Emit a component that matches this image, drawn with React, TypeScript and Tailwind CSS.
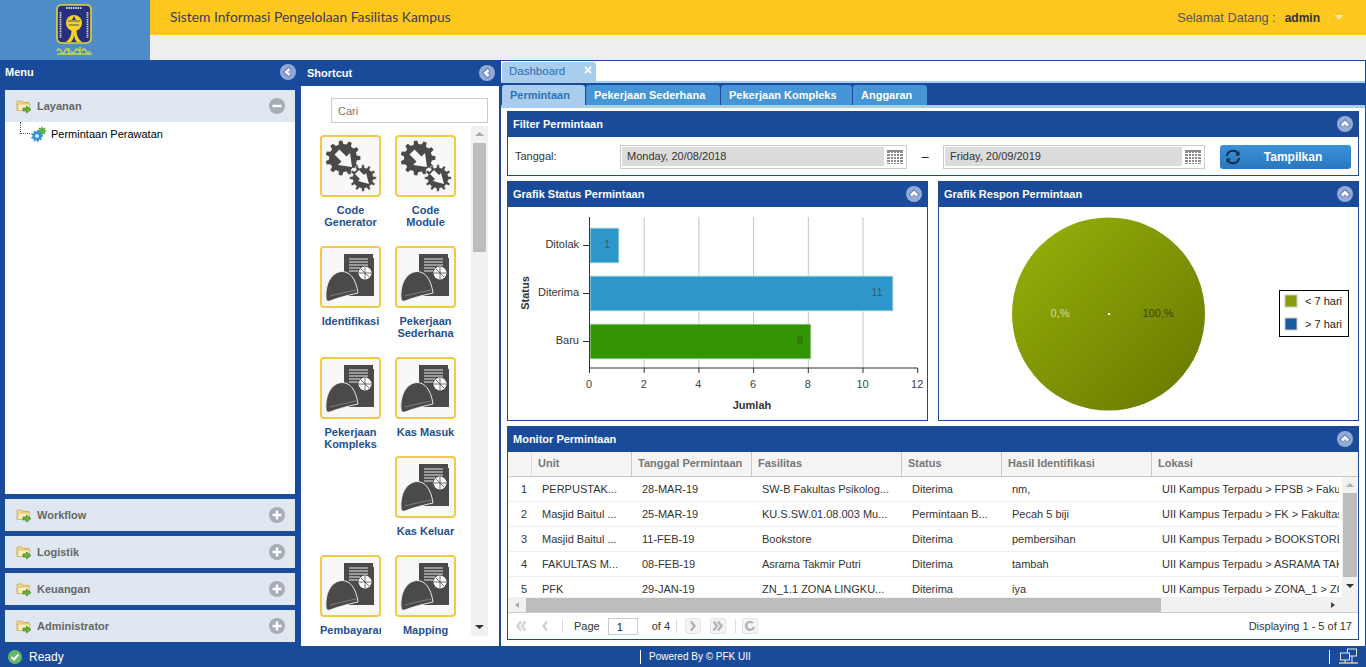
import { ReactNode } from "react";

const gearPath = (cx: number, cy: number, ro: number, ri: number, teeth: number) => {
  const pts: string[] = [];
  const step = (Math.PI * 2) / teeth;
  for (let i = 0; i < teeth; i++) {
    const a = i * step;
    const offs: [number, number][] = [
      [-0.3, ri],
      [-0.17, ro],
      [0.17, ro],
      [0.3, ri],
    ];
    offs.forEach(([o, r]) => {
      const t = a + o * step;
      pts.push(`${(cx + Math.cos(t) * r).toFixed(2)},${(cy + Math.sin(t) * r).toFixed(2)}`);
    });
  }
  return `M${pts.join("L")}Z`;
};

function GearIcon() {
  return (
    <svg width="57" height="58" viewBox="2 2 57 58">
      <path d={gearPath(23, 23, 17.5, 14, 11)} fill="#4a4a4a" />
      <path d={gearPath(43, 43, 13.5, 10.5, 12)} fill="#4a4a4a" stroke="#f8f8f8" strokeWidth="0.6" />
      <path d="M14.5 19.5 L19.5 14.5 L26.5 21.5 L30 18 L32 32 L18 30 L21.5 26.5 Z" fill="#f8f8f8" />
      <path d="M35 39 L39 35 L44 40 L46 38 L49 49 L38 46 L40 44 Z" fill="#f8f8f8" />
    </svg>
  );
}

function HatIcon() {
  return (
    <svg width="57" height="58" viewBox="2 2 57 58">
      <rect x="28" y="12" width="26" height="38" fill="#4a4a4a" />
      <rect x="24" y="8" width="29" height="37" fill="#4a4a4a" />
      <path d="M29 13H48M29 16H48M29 19H48M29 22H40M29 25H38" stroke="#b5b5b5" strokeWidth="1.6" />
      <circle cx="45" cy="27" r="6.5" fill="#fff" />
      <path d="M45 21V33M39 27H51M41 23L49 31" stroke="#4a4a4a" strokeWidth="0.8" />
      <path
        d="M6 52 C5 40 10 27 21 25.500 C30 25 36 33 38 47 C29 49 17 52 10 55 C8 55.500 6 55 6 52 Z"
        fill="#4a4a4a"
        stroke="#f8f8f8"
        strokeWidth="0.9"
      />
      <path d="M10 50 C17 48 27 46 36 44" stroke="#8a8a8a" strokeWidth="0.8" fill="none" />
    </svg>
  );
}

function Logo() {
  return (
    <svg width="40" height="52" viewBox="0 0 40 52">
      <path d="M6 1 H32 Q36 1 36 6 V34 Q36 39 30 39 H8 Q2 39 2 34 V6 Q2 1 6 1 Z" fill="#27307f" stroke="#e2d43a" strokeWidth="1.6" />
      <path d="M11 4 H27 M5.5 8 V34 M32.5 8 V34" stroke="#d8d8c8" strokeWidth="1.8" strokeDasharray="1.5 0.8" />
      <circle cx="19" cy="19" r="8" fill="#f2d520" />
      <path d="M13 17 H25 M14 21 H24" stroke="#27307f" strokeWidth="0.8" />
      <path d="M19 12 L21 16 H17 Z" fill="#27307f" />
      <path d="M16.5 26 C16.5 31 15 35 11 38 H16 C18 36 19 33 19 30 C19 33 20 36 22 38 H27 C23 35 21.5 31 21.5 26 Z" fill="#f2d520" />
      <path
        d="M2 47 q2 -4 4 0 t4 0 t4 0 M14 44 v6 M16 47 q2 4 4 0 t4 0 M25 43 v7 M27 47 q2 -4 4 0 t4 0 M2 50 H37"
        stroke="#c6d84a"
        strokeWidth="1.6"
        fill="none"
      />
    </svg>
  );
}

function Chevron({ dir }: { dir: "left" | "up" }) {
  return (
    <svg width="16" height="16" viewBox="0 0 16 16" className="shrink-0">
      <circle cx="8" cy="8" r="8" fill="#94abd6" />
      <path
        d={dir === "left" ? "M10 3.8 L5.8 8 L10 12.2" : "M3.8 10 L8 5.8 L12.2 10"}
        fill="none"
        stroke="#5f84bb"
        strokeWidth="4.4"
      />
      <path
        d={dir === "left" ? "M9.5 4.8 L6.3 8 L9.5 11.2" : "M4.8 9.5 L8 6.3 L11.2 9.5"}
        fill="none"
        stroke="#fff"
        strokeWidth="2.6"
      />
    </svg>
  );
}

function Folder() {
  return (
    <svg width="16" height="16" viewBox="0 0 16 16" className="shrink-0">
      <path d="M1 3 H6 L7 4.5 H13 V12.5 H1 Z" fill="#f5dc8c" stroke="#c9a550" strokeWidth="0.8" />
      <path d="M2 6 H14 L13 12.5 H1.5 Z" fill="#fbeeb8" stroke="#c9a550" strokeWidth="0.6" />
      <path d="M7 10 H10.5 V8 L15 11.5 L10.5 15 V13 H7 Z" fill="#6cb23e" stroke="#3f7f22" strokeWidth="0.7" />
    </svg>
  );
}

function AccordionHead({ label, open }: { label: string; open?: boolean }) {
  return (
    <div className="h-8 bg-[#dfe8f1] flex items-center pl-[11px] pr-[10px] shrink-0">
      <Folder />
      <span className="ml-[5px] flex-1 text-[11px] font-bold text-[#666]">{label}</span>
      <svg width="16" height="16" viewBox="0 0 16 16">
        <circle cx="8" cy="8" r="8" fill="#a6adb5" />
        <path d={open ? "M3.5 8H12.5" : "M3.5 8H12.5M8 3.5V12.5"} stroke="#fff" strokeWidth="2.4" />
      </svg>
    </div>
  );
}

function Shortcut({ label, icon }: { label: ReactNode; icon: "gear" | "hat" }) {
  return (
    <div className="w-[61px]">
      <div className="w-[61px] h-[62px] border-2 border-[#f3ca47] rounded-[4px] bg-[#f8f8f8] flex items-center justify-center">
        {icon === "gear" ? <GearIcon /> : <HatIcon />}
      </div>
      <div className="mt-[7px] text-[11px] leading-[12px] font-bold text-[#25508f] text-center overflow-hidden whitespace-nowrap">
        {label}
      </div>
    </div>
  );
}

function PanelHead({ title }: { title: string }) {
  return (
    <div className="h-[26px] bg-[#1a4b9a] flex items-center justify-between pl-[5px] pr-[5px] shrink-0">
      <span className="text-[11px] font-bold text-white">{title}</span>
      <Chevron dir="up" />
    </div>
  );
}

function DateField({ value, width }: { value: string; width: string }) {
  return (
    <div className={`h-[24px] border border-[#ccc] flex items-center pl-[1px] pr-[3px] ${width}`}>
      <div className="flex-1 h-[19px] bg-[#dcdcdc] pl-[5px] text-[11px] leading-[19px] text-[#333]">{value}</div>
      <svg width="16" height="14" viewBox="0 0 16 14" className="ml-[3px]">
        <rect width="16" height="14" fill="#8d8d8d" />
        <path d="M0 3.5H16M0 6.5H16M0 9.5H16M0 12.5H16M3.5 2V14M6.5 2V14M9.5 2V14M12.5 2V14" stroke="#fff" strokeWidth="1" />
      </svg>
    </div>
  );
}

function BarChart() {
  const bars = [
    { y: 228, to: 619, c: "#2e97c9", label: "Ditolak", v: "1", tx: 607 },
    { y: 276, to: 893, c: "#2e97c9", label: "Diterima", v: "11", tx: 877 },
    { y: 324, to: 811, c: "#329400", label: "Baru", v: "8", tx: 800 },
  ];
  const ticks = [0, 2, 4, 6, 8, 10, 12];
  const xOf = (t: number) => 589.5 + t * 27.35;
  return (
    <svg width="419" height="213" viewBox="508 207 419 213" fontFamily="'Liberation Sans', Arial, sans-serif">
      {ticks.slice(1, 6).map((t) => (
        <line key={t} x1={xOf(t)} x2={xOf(t)} y1="217" y2="368" stroke="#c4c4c4" />
      ))}
      {bars.map((b) => (
        <g key={b.label}>
          <rect x="590" y={b.y} width={b.to - 590} height="35" fill={b.c} stroke="#d8e8e0" strokeWidth="1" />
          <line x1="583" x2="589.5" y1={b.y + 17.5} y2={b.y + 17.5} stroke="#333" />
          <text x="579" y={b.y + 20} textAnchor="end" fontSize="11" fill="#333">
            {b.label}
          </text>
          <text x={b.tx} y={b.y + 20} textAnchor="middle" fontSize="11" fill="#333" fillOpacity="0.6">
            {b.v}
          </text>
        </g>
      ))}
      <path d="M589.5 217V368H917.7" fill="none" stroke="#333" />
      {ticks.map((t) => (
        <g key={t}>
          <line x1={xOf(t)} x2={xOf(t)} y1="368" y2="373" stroke="#333" />
          <text x={xOf(t) - 0.5} y="388" textAnchor="middle" fontSize="11" fill="#444">
            {t}
          </text>
        </g>
      ))}
      <text x="752" y="409" textAnchor="middle" fontSize="11" fontWeight="bold" fill="#333">
        Jumlah
      </text>
      <text x="0" y="0" transform="translate(529 293) rotate(-90)" textAnchor="middle" fontSize="11" fontWeight="bold" fill="#333">
        Status
      </text>
    </svg>
  );
}

function PieChart() {
  return (
    <svg width="419" height="213" viewBox="939 207 419 213" fontFamily="'Liberation Sans', Arial, sans-serif">
      <defs>
        <linearGradient id="pie" x1="0.1" y1="0.1" x2="0.9" y2="0.9">
          <stop offset="0" stopColor="#93ac09" />
          <stop offset="1" stopColor="#6c7c00" />
        </linearGradient>
      </defs>
      <circle cx="1108.5" cy="314" r="96.5" fill="url(#pie)" />
      <rect x="1108" y="313" width="2" height="2" fill="#fff" />
      <text x="1060" y="317" textAnchor="middle" fontSize="11" fill="#d4dba0">
        0,%
      </text>
      <text x="1158" y="317" textAnchor="middle" fontSize="11" fill="#3c4400">
        100,%
      </text>
      <rect x="1279.5" y="290.5" width="69" height="46" fill="#fff" stroke="#000" />
      <rect x="1285" y="295" width="12" height="12" fill="#8a9e0c" stroke="#ccc" />
      <rect x="1285" y="318" width="12" height="12" fill="#1a5a9e" stroke="#ccc" />
      <text x="1305" y="305" fontSize="11" fill="#222">
        {"< 7 hari"}
      </text>
      <text x="1305" y="328" fontSize="11" fill="#222">
        {"> 7 hari"}
      </text>
    </svg>
  );
}

const columns = [
  { title: "Unit", w: "w-[100px]" },
  { title: "Tanggal Permintaan", w: "w-[120px]" },
  { title: "Fasilitas", w: "w-[150px]" },
  { title: "Status", w: "w-[100px]" },
  { title: "Hasil Identifikasi", w: "w-[150px]" },
  { title: "Lokasi", w: "w-[190px]" },
];

const rows = [
  ["1", "PERPUSTAK...", "28-MAR-19", "SW-B Fakultas Psikolog...", "Diterima", "nm,", "UII Kampus Terpadu > FPSB > Fakultas"],
  ["2", "Masjid Baitul ...", "25-MAR-19", "KU.S.SW.01.08.003 Mu...", "Permintaan B...", "Pecah 5 biji", "UII Kampus Terpadu > FK > Fakultas Ke"],
  ["3", "Masjid Baitul ...", "11-FEB-19", "Bookstore", "Diterima", "pembersihan", "UII Kampus Terpadu > BOOKSTORE"],
  ["4", "FAKULTAS M...", "08-FEB-19", "Asrama Takmir Putri", "Diterima", "tambah", "UII Kampus Terpadu > ASRAMA TAKMIR"],
  ["5", "PFK", "29-JAN-19", "ZN_1.1 ZONA LINGKU...", "Diterima", "iya", "UII Kampus Terpadu > ZONA_1 > ZONA"],
];

function PagerBtn({ d, flat }: { d: string; flat?: boolean }) {
  return (
    <svg width="16" height="16" viewBox="0 0 16 16" className="shrink-0">
      {!flat && <rect x="0.5" y="0.5" width="15" height="15" rx="2" fill="#f4f4f4" stroke="#e4e4e4" />}
      <path d={d} fill="none" stroke={flat ? "#d2d2d2" : "#b4b4b4"} strokeWidth="2.4" />
    </svg>
  );
}

function MonitorGrid() {
  return (
    <div className="flex-1 min-h-0 flex flex-col">
      <div className="h-[25px] bg-[#f5f5f5] border-b border-[#c8c8c8] flex shrink-0 text-[11px] font-bold text-[#777]">
        <div className="w-[24px] border-r border-[#ddd] shrink-0" />
        {columns.map((c) => (
          <div key={c.title} className={`${c.w} shrink-0 pl-[6px] leading-[23px] border-r border-[#c8c8c8] last:border-r-0 whitespace-nowrap overflow-hidden`}>
            {c.title}
          </div>
        ))}
      </div>
      <div className="h-[120px] flex shrink-0 overflow-hidden">
        <div className="flex-1 min-w-0 mr-[3px] overflow-hidden">
          {rows.map((r, i) => (
            <div key={r[0]} className={`h-[25px] flex text-[11px] leading-[25px] text-[#333] ${i < 4 ? "border-b border-[#eee]" : ""}`}>
              <div className="w-[24px] shrink-0 text-center pl-[8px]">{r[0]}</div>
              {columns.map((c, j) => (
                <div key={c.title} className={`${c.w} shrink-0 pl-[10px] whitespace-nowrap overflow-hidden`}>
                  {r[j + 1]}
                </div>
              ))}
            </div>
          ))}
        </div>
        <div className="w-[15px] mr-px shrink-0 bg-[#f1f1f1] flex flex-col items-center">
          <svg width="8" height="16" viewBox="0 0 8 16"><path d="M0 10 L4 6 L8 10Z" fill="#b0b0b0" /></svg>
          <div className="w-[14px] h-[84px] bg-[#bdbdbd]" />
          <svg width="8" height="20" viewBox="0 0 8 20"><path d="M0 7 L4 11 L8 7Z" fill="#333" /></svg>
        </div>
      </div>
      <div className="h-[16px] bg-[#f1f1f1] flex items-center shrink-0 border-b border-[#ccc]">
        <svg width="18" height="14" viewBox="0 0 18 14" className="shrink-0"><path d="M11 4 L7 7 L11 10Z" fill="#a8a8a8" /></svg>
        <div className="w-[635px] h-[14px] bg-[#bdbdbd] shrink-0" />
        <div className="flex-1" />
        <svg width="14" height="14" viewBox="0 0 14 14" className="shrink-0 mr-[18px]"><path d="M5 4 L9 7 L5 10Z" fill="#444" /></svg>
      </div>
      <div className="flex-1 flex items-center pl-[5px] pr-[6px] text-[11px] text-[#333]">
        <PagerBtn flat d="M8 3.5 L4.5 8 L8 12.5M12.5 3.5 L9 8 L12.5 12.5" />
        <div className="ml-[8px]"><PagerBtn flat d="M10 3.5 L6.5 8 L10 12.5" /></div>
        <div className="w-px h-[14px] bg-[#ddd] ml-[9px]" />
        <span className="ml-[11px]">Page</span>
        <div className="ml-[8px] w-[30px] h-[17px] border border-[#ccc] pl-[8px] leading-[17px] text-[#222]">1</div>
        <span className="ml-[14px]">of 4</span>
        <div className="w-px h-[14px] bg-[#ddd] ml-[6px]" />
        <div className="ml-[8px]"><PagerBtn d="M6 3.5 L9.5 8 L6 12.5" /></div>
        <div className="ml-[9px]"><PagerBtn d="M3.5 3.5 L7 8 L3.5 12.5M8 3.5 L11.5 8 L8 12.5" /></div>
        <div className="w-px h-[14px] bg-[#ddd] ml-[9px]" />
        <div className="ml-[6px]"><PagerBtn d="M11 5 A4 4 0 1 0 12 9" /></div>
        <span className="ml-auto">Displaying 1 - 5 of 17</span>
      </div>
    </div>
  );
}

export default function App() {
  return (
    <div className="w-[1366px] h-[667px] overflow-hidden flex flex-col bg-[#1a4b9a] font-['Liberation_Sans',Arial,sans-serif]">
      {/* header */}
      <div className="h-[60px] flex shrink-0">
        <div className="w-[150px] bg-[#4f8dc9] flex justify-center pt-[4px]">
          <Logo />
        </div>
        <div className="flex-1 flex flex-col">
          <div className="h-[35px] bg-[#fdc71d] flex items-center pl-[20px]">
            <span className="font-['Lato',sans-serif] text-[13.85px] text-[#3c3c50]">
              Sistem Informasi Pengelolaan Fasilitas Kampus
            </span>
            <span className="ml-auto text-[12.75px] text-[#55554a]">Selamat Datang :</span>
            <span className="ml-[9px] text-[12px] font-bold text-[#333]">admin</span>
            <div className="ml-[9px] w-px h-[15px] bg-[#f0d268]" />
            <svg width="8" height="5" viewBox="0 0 8 5" className="ml-[5px] mr-[23px]">
              <path d="M0 0H8L4 5Z" fill="#fbeeb0" />
            </svg>
          </div>
          <div className="flex-1 bg-[#eeeeee]" />
        </div>
      </div>

      {/* body */}
      <div className="flex-1 min-h-0 flex">
        {/* menu column */}
        <div className="w-[300px] shrink-0 flex flex-col pl-[5px] pr-[5px] pb-[4px]">
          <div className="h-[30px] flex items-center justify-between shrink-0 pb-[6px]">
            <span className="text-[11px] font-bold text-white">Menu</span>
            <div className="-mr-px"><Chevron dir="left" /></div>
          </div>
          <AccordionHead label="Layanan" open />
          <div className="flex-1 bg-white">
            <div className="flex items-center h-[24px] pl-[15px]">
              <div className="w-[10px] h-[12px] border-l border-b border-dotted border-[#555] -mt-[12px]" />
              <svg width="16" height="16" viewBox="0 0 16 16" className="ml-[1px]">
                <path d={gearPath(11, 5, 4.5, 3.2, 8)} fill="#5fae45" />
                <path d={gearPath(6, 10, 6, 4.5, 9)} fill="#2f8fd0" />
                <circle cx="6" cy="10" r="2" fill="#cfe9f9" />
              </svg>
              <span className="ml-[4px] text-[11px] text-black">Permintaan Perawatan</span>
            </div>
          </div>
          <div className="flex flex-col gap-[5px] pt-[5px]">
            {["Workflow", "Logistik", "Keuangan", "Administrator"].map((m) => (
              <AccordionHead key={m} label={m} />
            ))}
          </div>
        </div>

        {/* shortcut column */}
        <div className="w-[198px] ml-[1px] shrink-0 flex flex-col">
          <div className="h-[26px] flex items-center justify-between pl-[6px] pr-[4px] shrink-0">
            <span className="text-[11px] font-bold text-white">Shortcut</span>
            <Chevron dir="left" />
          </div>
          <div className="flex-1 min-h-0 bg-white flex flex-col pt-[12px] pr-[11px] pb-[10px]">
            <div className="ml-[30px] h-[25px] border border-[#ccc] pl-[6px] text-[11px] leading-[24px] text-[#777] shrink-0">Cari</div>
            <div className="flex-1 min-h-0 flex mt-[3px]">
              <div className="flex-1 overflow-hidden pl-[19px] pt-[9px]">
                <div className="grid grid-cols-[61px_61px] gap-x-[14px] auto-rows-min">
                  <div className="h-[111px]"><Shortcut icon="gear" label={<>Code<br />Generator</>} /></div>
                  <div className="h-[111px]"><Shortcut icon="gear" label={<>Code<br />Module</>} /></div>
                  <div className="h-[111px]"><Shortcut icon="hat" label="Identifikasi" /></div>
                  <div className="h-[111px]"><Shortcut icon="hat" label={<>Pekerjaan<br />Sederhana</>} /></div>
                  <div className="h-[99px]"><Shortcut icon="hat" label={<>Pekerjaan<br />Kompleks</>} /></div>
                  <div className="h-[99px]"><Shortcut icon="hat" label="Kas Masuk" /></div>
                  <div className="h-[99px]" />
                  <div className="h-[99px]"><Shortcut icon="hat" label="Kas Keluar" /></div>
                  <Shortcut icon="hat" label="Pembayaran" />
                  <Shortcut icon="hat" label="Mapping" />
                </div>
              </div>
              <div className="w-[17px] shrink-0 bg-[#f1f1f1] flex flex-col items-center">
                <svg width="9" height="17" viewBox="0 0 9 17"><path d="M0 10 L4.5 6 L9 10Z" fill="#aaa" /></svg>
                <div className="w-[13px] h-[109px] bg-[#bdbdbd]" />
                <div className="flex-1" />
                <svg width="9" height="17" viewBox="0 0 9 17"><path d="M0 6 L4.5 10 L9 6Z" fill="#333" /></svg>
              </div>
            </div>
          </div>
        </div>

        {/* main column */}
        <div className="flex-1 min-w-0 ml-[2px] mr-[1px] flex flex-col">
          <div className="h-[23px] mt-[1px] flex flex-col shrink-0">
            <div className="h-[20px] bg-white flex items-end pl-[1px]">
              <div className="w-[94px] h-[19px] bg-[#a9cdec] rounded-t-[3px] flex items-center justify-between pl-[7px] pr-[4px] text-[11.5px] text-[#2b6cb0]">
                Dashboard
                <span className="text-white text-[14px] font-bold leading-none -mt-[4px]">×</span>
              </div>
            </div>
            <div className="h-[2px] bg-[#a9cdec]" />
          </div>
          <div className="h-[21px] bg-[#1a4b9a] flex items-end pl-[1px] gap-px shrink-0 text-[11px] font-bold">
            <div className="w-[83px] h-[20px] bg-[#a9cdec] text-[#2e73b8] rounded-t-[3px] pl-[8px] leading-[20px]">Permintaan</div>
            <div className="w-[134px] h-[20px] bg-[#4695d6] text-white rounded-t-[3px] pl-[8px] leading-[20px]">Pekerjaan Sederhana</div>
            <div className="w-[131px] h-[20px] bg-[#4695d6] text-white rounded-t-[3px] pl-[8px] leading-[20px]">Pekerjaan Kompleks</div>
            <div className="w-[74px] h-[20px] bg-[#4695d6] text-white rounded-t-[3px] pl-[8px] leading-[20px]">Anggaran</div>
          </div>
          <div className="h-[3px] bg-[#a9cdec] shrink-0" />
          <div className="flex-1 min-h-0 bg-white flex flex-col gap-[5px] pt-[3px] pl-[6px] pr-[6px] pb-[6px]">
            <div className="h-[65px] border border-[#1a4b9a] border-t-0 flex flex-col shrink-0">
              <PanelHead title="Filter Permintaan" />
              <div className="flex-1 flex items-center pl-[7px] pt-[1px] text-[11px] text-[#333]">
                <span className="w-[105px]">Tanggal:</span>
                <DateField value="Monday, 20/08/2018" width="w-[287px]" />
                <span className="w-[36px] text-center text-[13px] text-[#222]">–</span>
                <DateField value="Friday, 20/09/2019" width="w-[262px]" />
                <div className="ml-[15px] w-[131px] h-[24px] rounded-[3px] bg-gradient-to-b from-[#3b92d8] to-[#2877bf] flex items-center pl-[4px] pr-[6px]">
                  <svg width="16" height="16" viewBox="0 0 16 16" className="ml-[1px]">
                    <path d="M2 7 A6 6 0 0 1 13 4.5 M14 9 A6 6 0 0 1 3 11.5" fill="none" stroke="#12294a" strokeWidth="2" />
                    <path d="M14.5 2 V6.5 H10 Z M1.5 14 V9.5 H6 Z" fill="#12294a" />
                  </svg>
                  <span className="flex-1 text-center text-[12px] font-bold text-white">Tampilkan</span>
                </div>
              </div>
            </div>
            <div className="h-[240px] flex gap-[10px] shrink-0">
              <div className="w-[421px] border border-[#1a4b9a] border-t-0 flex flex-col">
                <PanelHead title="Grafik Status Permintaan" />
                <BarChart />
              </div>
              <div className="w-[421px] border border-[#1a4b9a] border-t-0 flex flex-col">
                <PanelHead title="Grafik Respon Permintaan" />
                <PieChart />
              </div>
            </div>
            <div className="flex-1 min-h-0 border border-[#1a4b9a] border-t-0 flex flex-col">
              <PanelHead title="Monitor Permintaan" />
              <MonitorGrid />
            </div>
          </div>
        </div>
      </div>

      {/* status bar */}
      <div className="h-[21px] flex items-center shrink-0 text-white">
        <svg width="14" height="14" viewBox="0 0 14 14" className="ml-[8px]">
          <circle cx="7" cy="7" r="7" fill="#63b96a" />
          <path d="M3.5 7 L6 9.5 L10.5 4.5" fill="none" stroke="#fff" strokeWidth="2" />
        </svg>
        <span className="ml-[7px] text-[12px] w-[66px]">Ready</span>
        <div className="ml-[545px] w-px h-[14px] bg-white" />
        <span className="ml-[8px] text-[10px] text-white">Powered By © PFK UII</span>
        <div className="ml-auto w-px h-[14px] bg-white" />
        <svg width="19" height="17" viewBox="0 0 19 17" className="ml-[9px] mr-[8px]">
          <rect x="8.5" y="1" width="9" height="7" fill="#1a4b9a" stroke="#dfe8f5" />
          <rect x="1.5" y="5" width="9" height="7" fill="#1a4b9a" stroke="#dfe8f5" />
          <path d="M0 15H19" stroke="#e9c46a" strokeWidth="1.5" />
          <path d="M6 12V15M13 8V15" stroke="#dfe8f5" />
        </svg>
      </div>
    </div>
  );
}
